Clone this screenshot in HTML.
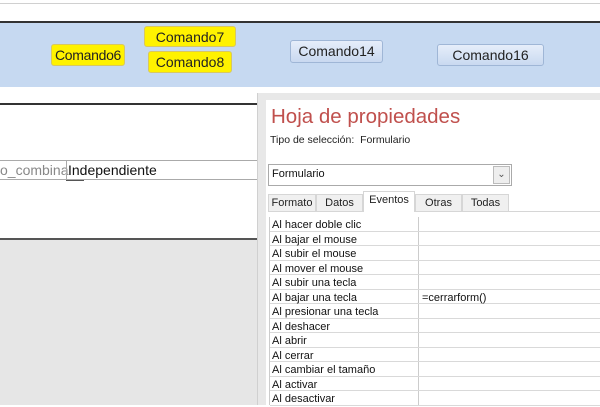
<!DOCTYPE html>
<html><head><meta charset="utf-8"><style>
*{margin:0;padding:0;box-sizing:border-box}
body{width:600px;height:405px;overflow:hidden;background:#fff;position:relative;font-family:"Liberation Sans",sans-serif}
.a{position:absolute}
.btn{position:absolute;font-size:14px;color:#222;text-align:center;border-radius:3px;line-height:20px}
.y{background:#fff200;border:1px solid #d8c860}
.b{background:linear-gradient(#e6eefa,#c9d9f0);border:1px solid #9fb6d6}
.tab{position:absolute;top:194px;height:18px;background:#f0f0f0;border:1px solid #d6d6d6;border-bottom:none;font-size:11px;color:#222;text-align:center;line-height:16px}
.row{position:absolute;left:270px;width:330px;height:14.5px;border-bottom:1px solid #d9d9d9;font-size:11px;color:#111;line-height:16px}
.row span{position:absolute;left:2px}
.row i{position:absolute;left:152px;font-style:normal}
</style></head><body>
<div class="a" style="left:0;top:3px;width:600px;height:1px;background:#d0d0d0"></div>
<div class="a" style="left:0;top:21px;width:600px;height:2px;background:#333"></div>
<div class="a" style="left:0;top:23px;width:600px;height:64px;background:#c6d9f1"></div>
<div class="btn y" style="left:51px;top:44px;width:74px;height:22px;letter-spacing:-0.3px">Comando6</div>
<div class="btn y" style="left:144px;top:26px;width:92px;height:21px">Comando7</div>
<div class="btn y" style="left:148px;top:51px;width:84px;height:22px">Comando8</div>
<div class="btn b" style="left:290px;top:40px;width:93px;height:23px">Comando14</div>
<div class="btn b" style="left:437px;top:44px;width:107px;height:22px">Comando16</div>
<div class="a" style="left:0;top:103px;width:258px;height:2px;background:#333"></div>
<div class="a" style="left:0;top:160px;width:258px;height:20px;border-top:1px solid #aaa;border-bottom:1px solid #aaa"></div>
<div class="a" style="left:0;top:162px;font-size:14px;color:#888">o_combina</div>
<div class="a" style="left:66px;top:160px;width:192px;height:20px;border-left:1px solid #aaa"></div>
<div class="a" style="left:68px;top:162px;font-size:14px;color:#111">Independiente</div>
<div class="a" style="left:66px;top:180px;width:18px;height:1px;background:#555"></div>
<div class="a" style="left:0;top:238px;width:258px;height:167px;background:#e6e6e6;border-top:2px solid #555"></div>
<div class="a" style="left:257px;top:93px;width:343px;height:312px;background:#e8e8e8;border-left:1px solid #d0d0d0"></div>
<div class="a" style="left:266px;top:100px;width:334px;height:305px;background:#fff"></div>
<div class="a" style="left:271px;top:105px;font-size:20.5px;color:#c0504d">Hoja de propiedades</div>
<div class="a" style="left:270px;top:134px;font-size:10.5px;color:#222">Tipo de selección:&nbsp; Formulario</div>
<div class="a" style="left:268px;top:164px;width:244px;height:22px;border:1px solid #aaa"></div>
<div class="a" style="left:272px;top:168px;font-size:11px;color:#111">Formulario</div>
<div class="a" style="left:493px;top:166px;width:17px;height:18px;background:#eee;border:1px solid #bbb;font-size:10px;color:#555;text-align:center;line-height:15px">&#8964;</div>
<div class="tab" style="left:268px;width:48px">Formato</div>
<div class="tab" style="left:316px;width:47px">Datos</div>
<div class="tab" style="left:363px;top:191px;height:21px;width:52px;background:#fff;z-index:2">Eventos</div>
<div class="tab" style="left:415px;width:47px">Otras</div>
<div class="tab" style="left:462px;width:47px">Todas</div>
<div class="a" style="left:268px;top:211px;width:332px;height:1px;background:#d6d6d6"></div>
<div class="a" style="left:269px;top:217px;width:1px;height:188px;background:#ccc"></div>
<div class="a" style="left:418px;top:217px;width:1px;height:188px;background:#ccc"></div>
<div class="row" style="top:217px"><span>Al hacer doble clic</span></div>
<div class="row" style="top:231.5px"><span>Al bajar el mouse</span></div>
<div class="row" style="top:246px"><span>Al subir el mouse</span></div>
<div class="row" style="top:260.5px"><span>Al mover el mouse</span></div>
<div class="row" style="top:275px"><span>Al subir una tecla</span></div>
<div class="row" style="top:289.5px"><span>Al bajar una tecla</span><i>=cerrarform()</i></div>
<div class="row" style="top:304px"><span>Al presionar una tecla</span></div>
<div class="row" style="top:318.5px"><span>Al deshacer</span></div>
<div class="row" style="top:333px"><span>Al abrir</span></div>
<div class="row" style="top:347.5px"><span>Al cerrar</span></div>
<div class="row" style="top:362px"><span>Al cambiar el tamaño</span></div>
<div class="row" style="top:376.5px"><span>Al activar</span></div>
<div class="row" style="top:391px"><span>Al desactivar</span></div>
</body></html>
